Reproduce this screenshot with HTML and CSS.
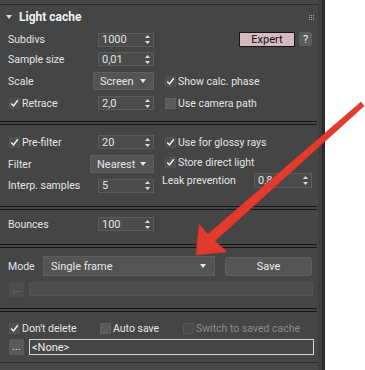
FILE: index.html
```html
<!DOCTYPE html>
<html lang="en">
<head>
    <meta charset="UTF-8" />
    <title>Light cache</title>
    <link rel="stylesheet" href="styles.css">
</head>
<body>
    <div class="frame">
        <div class="panel">
            <div class="topstrip"></div>

            <div class="head">
                <span class="tri"></span>
                <span class="title">Light cache</span>
                <svg class="grip" width="5" height="5" viewBox="0 0 5 5">
                    <path d="M0 0h1v1H0zM2 0h1v1H2zM4 0h1v1H4zM0 2h1v1H0zM2 2h1v1H2zM4 2h1v1H4zM0 4h1v1H0zM2 4h1v1H2zM4 4h1v1H4z" fill="#a8a8a8"/>
                </svg>
            </div>

            <!-- basic parameters -->
            <div class="sec sec1">
                <div class="row r1">
                    <div class="l">
                        <span>Subdivs</span>
                        <div class="spin"><span>1000</span><svg width="5" height="9" viewBox="0 0 5 9"><path d="M2.5 0L5 3H0zM0 6h5L2.5 9z" fill="#dcdcdc"/></svg></div>
                    </div>
                    <div class="tools">
                        <button class="expert">Expert</button>
                        <button class="help">?</button>
                    </div>
                </div>
                <div class="row r2">
                    <div class="l">
                        <span>Sample size</span>
                        <div class="spin"><span>0,01</span><svg width="5" height="9" viewBox="0 0 5 9"><path d="M2.5 0L5 3H0zM0 6h5L2.5 9z" fill="#dcdcdc"/></svg></div>
                    </div>
                </div>
                <div class="row r3">
                    <div class="l">
                        <span>Scale</span>
                        <div class="drop drop-scale"><span>Screen</span><i class="caret"></i></div>
                    </div>
                    <div class="r">
                        <label class="chk"><span class="box on"><svg width="11" height="11" viewBox="0 0 11 11"><path d="M1.5 5.5l2.8 3 5.2-7" fill="none" stroke="#f2f2f2" stroke-width="1.8"/></svg></span>Show calc. phase</label>
                    </div>
                </div>
                <div class="row r4">
                    <div class="l">
                        <label class="chk first"><span class="box on"><svg width="11" height="11" viewBox="0 0 11 11"><path d="M1.5 5.5l2.8 3 5.2-7" fill="none" stroke="#f2f2f2" stroke-width="1.8"/></svg></span>Retrace</label>
                        <div class="spin"><span>2,0</span><svg width="5" height="9" viewBox="0 0 5 9"><path d="M2.5 0L5 3H0zM0 6h5L2.5 9z" fill="#dcdcdc"/></svg></div>
                    </div>
                    <div class="r">
                        <label class="chk"><span class="box"></span>Use camera path</label>
                    </div>
                </div>
            </div>

            <div class="sep"></div>

            <!-- filtering -->
            <div class="sec sec2">
                <div class="col-l">
                    <div class="row pre">
                        <div class="l">
                            <label class="chk first"><span class="box on"><svg width="11" height="11" viewBox="0 0 11 11"><path d="M1.5 5.5l2.8 3 5.2-7" fill="none" stroke="#f2f2f2" stroke-width="1.8"/></svg></span>Pre-filter</label>
                            <div class="spin"><span>20</span><svg width="5" height="9" viewBox="0 0 5 9"><path d="M2.5 0L5 3H0zM0 6h5L2.5 9z" fill="#dcdcdc"/></svg></div>
                        </div>
                    </div>
                    <div class="row filt">
                        <div class="l">
                            <span>Filter</span>
                            <div class="drop drop-filter"><span>Nearest</span><i class="caret"></i></div>
                        </div>
                    </div>
                    <div class="row interp">
                        <div class="l">
                            <span>Interp. samples</span>
                            <div class="spin"><span>5</span><svg width="5" height="9" viewBox="0 0 5 9"><path d="M2.5 0L5 3H0zM0 6h5L2.5 9z" fill="#dcdcdc"/></svg></div>
                        </div>
                    </div>
                </div>
                <div class="col-r">
                    <div class="row glossy">
                        <label class="chk"><span class="box on"><svg width="11" height="11" viewBox="0 0 11 11"><path d="M1.5 5.5l2.8 3 5.2-7" fill="none" stroke="#f2f2f2" stroke-width="1.8"/></svg></span>Use for glossy rays</label>
                    </div>
                    <div class="row store">
                        <label class="chk"><span class="box on"><svg width="11" height="11" viewBox="0 0 11 11"><path d="M1.5 5.5l2.8 3 5.2-7" fill="none" stroke="#f2f2f2" stroke-width="1.8"/></svg></span>Store direct light</label>
                    </div>
                    <div class="row leak">
                        <span class="leak-lbl">Leak prevention</span>
                        <div class="spin spin-leak"><span>0,8</span><svg width="5" height="9" viewBox="0 0 5 9"><path d="M2.5 0L5 3H0zM0 6h5L2.5 9z" fill="#dcdcdc"/></svg></div>
                    </div>
                </div>
            </div>

            <div class="sep"></div>

            <div class="sec sec3">
                <div class="row">
                    <div class="l">
                        <span>Bounces</span>
                        <div class="spin"><span>100</span><svg width="5" height="9" viewBox="0 0 5 9"><path d="M2.5 0L5 3H0zM0 6h5L2.5 9z" fill="#dcdcdc"/></svg></div>
                    </div>
                </div>
            </div>

            <div class="sep"></div>

            <!-- mode -->
            <div class="sec sec4">
                <div class="row mode">
                    <span class="mode-lbl">Mode</span>
                    <div class="drop drop-mode"><span>Single frame</span><i class="caret"></i></div>
                    <button class="save">Save</button>
                </div>
                <div class="row file off">
                    <button class="dots">...</button>
                    <div class="path"></div>
                </div>
            </div>

            <div class="sep"></div>

            <!-- files -->
            <div class="sec sec5">
                <div class="row checks">
                    <label class="chk first w1"><span class="box on"><svg width="11" height="11" viewBox="0 0 11 11"><path d="M1.5 5.5l2.8 3 5.2-7" fill="none" stroke="#f2f2f2" stroke-width="1.8"/></svg></span>Don't delete</label>
                    <label class="chk w2"><span class="box"></span>Auto save</label>
                    <label class="chk dis"><span class="box"></span>Switch to saved cache</label>
                </div>
                <div class="row file">
                    <button class="dots">...</button>
                    <div class="path">&lt;None&gt;</div>
                </div>
            </div>

            <div class="bottom"></div>
        </div>
    </div>

    <svg class="arrow" width="365" height="370" viewBox="0 0 365 370">
        <polygon points="196,255 199,224 208,234 361,102 364,106 215,241 227,252" fill="#e23a2d" stroke="#c9302a" stroke-width="0.6"/>
    </svg>
</body>
</html>
```

FILE: styles.css
```css
body {
    margin: 0;
    background: #ffffff;
    font-family: Roboto, "Liberation Sans", sans-serif;
    font-size: 10.5px;
    color: #e4e4e4;
}

.frame {
    width: 325px;
    height: 370px;
    box-sizing: border-box;
    border-right: 3px solid #2b2b2b;
    background: #454545;
}

.panel {
    width: 318px;
    height: 370px;
    border-right: 4px solid #3e3e3e;
    background: #454545;
}

.topstrip {
    height: 4px;
    background: #474747;
    border-bottom: 1px solid #2c2c2c;
}

.head {
    height: 24px;
    display: flex;
    align-items: center;
    padding-left: 6px;
}

.tri {
    width: 0;
    height: 0;
    border-left: 3px solid transparent;
    border-right: 3px solid transparent;
    border-top: 4px solid #d8d8d8;
    margin-right: 7px;
}

.title {
    font-size: 12px;
    font-weight: bold;
    color: #f2f2f2;
}

.grip {
    margin-left: auto;
    margin-right: 4px;
}

.sec {
    padding-left: 8px;
}

.row {
    display: flex;
    align-items: center;
    height: 14px;
}

.l {
    width: 146px;
    display: flex;
    align-items: center;
    height: 100%;
}

.r {
    margin-left: 11px;
    display: flex;
    align-items: center;
}

/* section 1 */
.sec1 {
    padding-top: 3px;
    padding-bottom: 11px;
    padding-right: 6px;
}

.r1 { height: 15px; }
.r2 { margin-top: 5px; }
.r3 { margin-top: 6px; height: 18px; }
.r4 { margin-top: 6px; }

.tools {
    margin-left: auto;
    display: flex;
    gap: 4px;
}

button {
    font-family: inherit;
    font-size: 10.5px;
    padding: 0;
    cursor: pointer;
}

.expert {
    width: 56px;
    height: 15px;
    background: #d6b8c1;
    border: 1px solid #141414;
    color: #111111;
    font-size: 11px;
}

.help {
    width: 13px;
    height: 14px;
    background: #5c5c5c;
    border: none;
    border-radius: 2px;
    color: #e8e8e8;
    font-size: 11px;
}

/* inputs */
.spin {
    margin-left: auto;
    width: 56px;
    height: 14px;
    box-sizing: border-box;
    background: #4b4b4b;
    border: 1px solid #5b5b5b;
    display: flex;
    align-items: center;
    justify-content: space-between;
    padding: 0 3px 0 3px;
    font-size: 11px;
}

.spin-leak {
    width: 58px;
    height: 15px;
}

.drop {
    margin-left: auto;
    height: 18px;
    box-sizing: border-box;
    background: #545454;
    border: 1px solid #5e5e5e;
    display: flex;
    align-items: center;
    justify-content: space-between;
    padding: 0 7px 0 6px;
    font-size: 11px;
}

.drop-scale { width: 61px; }
.drop-filter { width: 64px; }

.caret {
    width: 0;
    height: 0;
    border-left: 3px solid transparent;
    border-right: 3px solid transparent;
    border-top: 4px solid #e6e6e6;
}

/* checkboxes */
.chk {
    display: flex;
    align-items: center;
    gap: 2px;
    white-space: nowrap;
}

.chk.first {
    margin-left: 1px;
}

.box {
    width: 11px;
    height: 11px;
    box-sizing: border-box;
    background: #5a5a5a;
    border: 1px solid #616161;
    display: flex;
    align-items: center;
    justify-content: center;
}

.box.on {
    background: #4e4e4e;
    border-color: #545454;
}

.chk.dis {
    color: #8c8c8c;
}

.chk.dis .box {
    background: #4a4a4a;
    border-color: #555555;
}

/* separators */
.sep {
    width: 317px;
    height: 2px;
    border-top: 1px solid #161616;
    border-bottom: 1px solid #161616;
}

/* section 2 */
.sec2 {
    display: flex;
    padding-top: 10px;
    padding-bottom: 13px;
    padding-right: 6px;
}

.col-l {
    width: 146px;
}

.col-r {
    flex: 1;
    margin-left: 11px;
}

.filt { margin-top: 6px; height: 18px; }
.interp { margin-top: 5px; height: 15px; }
.store { margin-top: 6px; }
.leak { margin-top: 4px; height: 15px; }

.leak-lbl {
    margin-left: -3px;
}

/* section 3 */
.sec3 {
    padding-top: 7px;
    padding-bottom: 13px;
}

/* section 4 */
.sec4 {
    padding-top: 8px;
    padding-bottom: 12px;
    padding-right: 5px;
}

.mode {
    height: 20px;
}

.mode-lbl {
    width: 35px;
}

.drop-mode {
    margin-left: 0;
    width: 172px;
    height: 20px;
    padding-left: 7px;
    padding-right: 8px;
}

.save {
    margin-left: 10px;
    width: 87px;
    height: 19px;
    background: #555555;
    border: 1px solid #606060;
    border-radius: 3px;
    color: #ececec;
    font-size: 11px;
}

.file {
    margin-top: 6px;
    gap: 5px;
}

.dots {
    margin-left: 1px;
    width: 15px;
    height: 15px;
    background: #5a5a5a;
    border: none;
    border-radius: 2px;
    color: #e2e2e2;
    line-height: 10px;
}

.path {
    flex: 1;
    height: 100%;
    box-sizing: border-box;
    border: 1px solid #d4d4d4;
    background: #464646;
    padding-left: 2px;
    display: flex;
    align-items: center;
    color: #f0f0f0;
    font-size: 11px;
}

.file.off .dots {
    background: #4d4d4d;
    color: #777777;
}

.file.off .path {
    background: #4c4c4c;
    border-color: #535353;
}

/* section 5 */
.sec5 {
    padding-top: 10px;
    padding-bottom: 7px;
    padding-right: 4px;
}

.checks {
    height: 12px;
}

.w1 { width: 91px; }
.w2 { width: 83px; }

.sec5 .file {
    margin-top: 5px;
    height: 16px;
}

.sec5 .file .dots {
    height: 16px;
}

.bottom {
    border-top: 1px solid #2c2c2c;
    height: 7px;
    background: #484848;
}

.arrow {
    position: absolute;
    top: 0;
    left: 0;
    pointer-events: none;
}
```
